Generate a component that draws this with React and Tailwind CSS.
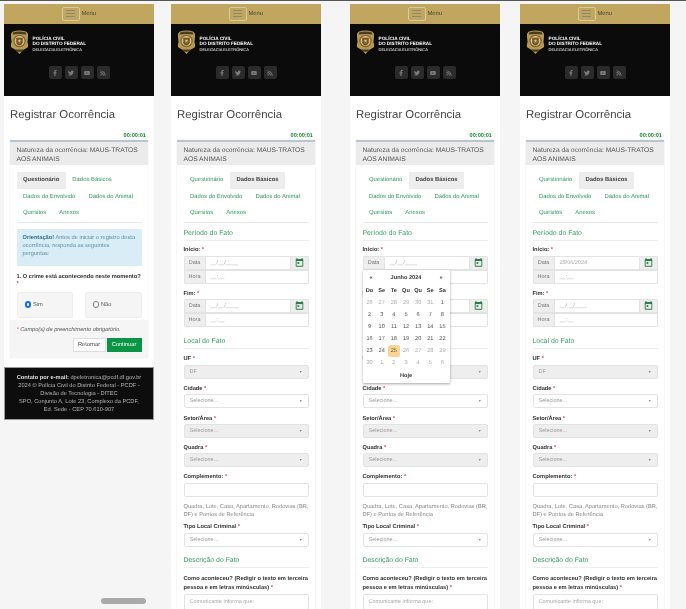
import React from "react";
import { FaFacebookF, FaTwitter, FaYoutube, FaRss } from "react-icons/fa";

const Req = () => <span className="text-[#d9534f]"> *</span>;

function Badge() {
  return (
    <svg viewBox="0 0 20 26" className="w-[19px] h-[26px] shrink-0">
      <path d="M2.5 2.2 Q10 -0.6 17.5 2.2 Q19.5 4 19 7 L18.4 13 Q19.6 16 18.8 18.5 L14 21.5 L10 25.6 L6 21.5 L1.2 18.5 Q0.4 16 1.6 13 L1 7 Q0.5 4 2.5 2.2 Z" fill="#b59a55" />
      <path d="M3.5 2.8 Q10 1 16.5 2.8 L17.2 5.2 Q10 3.8 2.8 5.2 Z" fill="#4a3d1c" />
      <path d="M5.5 21 L14.5 21 L12.6 23.2 L7.4 23.2 Z" fill="#4a3d1c" />
      <circle cx="10" cy="12" r="6.6" fill="#7a6a34" />
      <circle cx="10" cy="12" r="5.2" fill="#d8c074" />
      <path d="M6.6 8.6 H13.4 V13.5 Q13.4 15.6 10 16.6 Q6.6 15.6 6.6 13.5 Z" fill="#a8322a" />
      <path d="M8 9.6 H12 V13.2 Q12 14.6 10 15.2 Q8 14.6 8 13.2 Z" fill="#3b8a45" />
      <circle cx="10" cy="11.8" r="1.2" fill="#e6cd5c" />
    </svg>
  );
}

function Calendar() {
  return (
    <svg viewBox="0 0 10 10" className="w-[9px] h-[9px]">
      <rect x="1.6" y="0.2" width="1.3" height="1.8" fill="#2e7d4a" />
      <rect x="7.1" y="0.2" width="1.3" height="1.8" fill="#2e7d4a" />
      <rect x="0.8" y="1.2" width="8.4" height="8.4" rx="0.8" fill="#2e7d4a" />
      <rect x="1.8" y="3.4" width="6.4" height="5.2" fill="#e8f0ea" />
      <rect x="2.8" y="4.6" width="2" height="2" fill="#2e7d4a" />
    </svg>
  );
}

function Header() {
  const icons = [FaFacebookF, FaTwitter, FaYoutube, FaRss];
  return (
    <div>
      <div className="h-[19.5px] bg-[#c0a65f] flex justify-center items-center">
        <div className="flex items-center">
          <div className="w-[18px] h-[14px] border border-[#d9ca9a] rounded-[2px] flex flex-col justify-center gap-[2px] items-center">
            <span className="block w-[9px] h-[1px] bg-[#8c8872]" />
            <span className="block w-[9px] h-[1px] bg-[#8c8872]" />
            <span className="block w-[9px] h-[1px] bg-[#8c8872]" />
          </div>
          <span className="ml-[1.5px] pt-[2px] text-[5.9px] text-[#4f4733]">Menu</span>
        </div>
      </div>
      <div className="h-[72.5px] bg-[#0b0b0b] pt-[5.5px]">
        <div className="flex pl-[6px] items-start">
          <Badge />
          <div className="ml-[3.5px] mt-[6.5px] text-white font-bold">
            <div className="text-[4.7px] leading-[5.6px]">POLÍCIA CIVIL</div>
            <div className="text-[4.7px] leading-[5.6px]">DO DISTRITO FEDERAL</div>
            <div className="text-[4px] leading-[6px] mt-[0.8px] font-normal">DELEGACIA ELETRÔNICA</div>
          </div>
        </div>
        <div className="flex justify-center gap-[3px] mt-[11px]">
          {icons.map((I, i) => (
            <div key={i} className="w-[13px] h-[13px] rounded-[2px] bg-[#2b2b2b] flex items-center justify-center">
              <I className="text-[#7a7a7a] text-[6px]" />
            </div>
          ))}
        </div>
      </div>
    </div>
  );
}

function Tabs({ active }) {
  const rows = [["Questionário", "Dados Básicos"], ["Dados do Envolvido", "Dados do Animal"], ["Quesitos", "Anexos"]];
  return (
    <div className="mx-[6.5px] pt-[7px] border-b border-[#e8e8e8]">
      {rows.map((r, i) => (
        <div key={i} className="flex h-[16.5px]">
          {r.map((t) => (
            <div key={t} className={"px-[6.5px] leading-[16.5px] text-[5.9px] rounded-[1px] " + (t === active ? "bg-[#ededed] font-bold text-[#444]" : "text-[#2f9c5f]")}>
              {t}
            </div>
          ))}
        </div>
      ))}
    </div>
  );
}

function Section({ title, className }) {
  return <div className={"text-[6.9px] leading-[10px] text-[#2ea061] border-b border-[#eee] pb-[1px] " + className}>{title}</div>;
}

function Label({ children, className = "" }) {
  return <div className={"text-[5.7px] font-bold text-[#333] leading-[8px] " + className}>{children}</div>;
}

function Picker({ date }) {
  const row = (lbl, val, cal) => (
    <div className="flex h-[14px] text-[5.5px]">
      <div className="w-[22px] bg-[#eeeeee] border border-[#e3e3e3] text-[#777] flex items-center justify-center pt-[1.5px]">{lbl}</div>
      <div className={"flex-1 border-y border-[#e3e3e3] bg-white flex items-center pl-[5px] pt-[1.5px] text-[#aaa] " + (cal ? "" : "border-r")}>{val}</div>
      {cal && (
        <div className="w-[19px] bg-[#eeeeee] border border-[#e3e3e3] flex items-center justify-center">
          <Calendar />
        </div>
      )}
    </div>
  );
  return (
    <div className="rounded-[2px] overflow-hidden">
      {row("Data", date || "__/__/____", true)}
      {row("Hora", "__:__", false)}
    </div>
  );
}

function Select({ disabled, text = "Selecione..." }) {
  return (
    <div className={"h-[14px] border border-[#e3e3e3] rounded-[2px] flex items-center justify-between pl-[5px] pr-[5px] pt-[1.5px] text-[5.5px] text-[#999] " + (disabled ? "bg-[#eeeeee]" : "bg-white")}>
      <span>{text}</span>
      <span className="text-[3.5px] text-[#888]">▼</span>
    </div>
  );
}

function DatePopup() {
  const days = [
    [26, 27, 28, 29, 30, 31, 1],
    [2, 3, 4, 5, 6, 7, 8],
    [9, 10, 11, 12, 13, 14, 15],
    [16, 17, 18, 19, 20, 21, 22],
    [23, 24, 25, 26, 27, 28, 29],
    [30, 1, 2, 3, 4, 5, 6],
  ];
  return (
    <div className="absolute left-0 top-[14px] w-[87px] h-[113px] bg-white shadow-[0_1px_3px_rgba(0,0,0,0.35)] rounded-[1px] z-10 text-[5.6px] text-[#333] pt-[3px] px-[1px]">
      <div className="flex justify-between items-center h-[12px] px-[6px] font-bold">
        <span>«</span>
        <span>Junho 2024</span>
        <span>»</span>
      </div>
      <div className="grid grid-cols-7 font-bold text-center leading-[12px]">
        {["Do", "Se", "Te", "Qu", "Qu", "Se", "Sa"].map((d, i) => (
          <span key={i}>{d}</span>
        ))}
      </div>
      {days.map((r, ri) => (
        <div key={ri} className="grid grid-cols-7 text-center leading-[12px]">
          {r.map((d, i) => {
            const old = (ri === 0 && d > 20) || ri === 5 || (ri === 4 && d > 25);
            const sel = ri === 4 && d === 25;
            return (
              <span key={i} className={sel ? "bg-[#fad591] rounded-[2px] text-[#555]" : old ? "text-[#aaa]" : "text-[#555]"}>
                {d}
              </span>
            );
          })}
        </div>
      ))}
      <div className="text-center font-bold leading-[14px]">Hoje</div>
    </div>
  );
}

function Timer() {
  return <div className="text-right text-[5.6px] font-bold text-[#118a2f] leading-[7px] pr-[2px]">00:00:01</div>;
}

function Title() {
  return (
    <div className="h-[37px] pt-[10.5px] text-[11.4px] leading-[16px] text-[#444]">Registrar Ocorrência</div>
  );
}

function CardHead() {
  return (
    <div className="bg-[#ebebeb] border-t-2 border-[#b9c6cf] px-[6.5px] pt-[3.5px] h-[25px] text-[6.7px] leading-[9.5px] text-[#555]">
      Natureza da ocorrência: MAUS-TRATOS AOS ANIMAIS
    </div>
  );
}

function First() {
  return (
    <div className="w-[150px] shrink-0">
      <div className="bg-white h-[363px] flex flex-col">
        <Header />
        <div className="px-[6px]">
          <Title />
          <Timer />
          <div className="bg-[#f5f5f5] rounded-[2px] shadow-[0_0_1px_rgba(0,0,0,0.2)] h-[218px]">
            <CardHead />
            <div className="bg-white h-[155px]">
              <Tabs active="Questionário" />
              <div className="mx-[6.5px] mt-[6px] h-[37px] bg-[#d9edf7] rounded-[1px] px-[6px] pt-[5.5px] text-[5.7px] leading-[8px] text-[#5d8ca6]">
                <b className="text-[#31708f]">Orientação!</b> Antes de iniciar o registro desta<br />ocorrência, responda as seguintes<br />perguntas:
              </div>
              <div className="mx-[6.5px] mt-[8px] text-[5.7px] font-bold text-[#333] leading-[7.5px] whitespace-nowrap">
                1. O crime está acontecendo neste momento?<br /><span className="text-[#d9534f]">*</span>
              </div>
              <div className="mx-[6.5px] mt-[3px] flex justify-between">
                <div className="w-[56px] h-[26px] bg-[#f5f5f5] border border-[#eee] rounded-[2px] flex items-center pl-[7px] text-[5.7px] text-[#555]">
                  <span className="w-[6.5px] h-[6.5px] rounded-full border-[2px] border-[#0a6fe8] bg-white mr-[2px]" /><span className="pt-[1.5px]">Sim</span>
                </div>
                <div className="w-[57px] h-[26px] bg-[#f5f5f5] border border-[#eee] rounded-[2px] flex items-center pl-[7px] text-[5.7px] text-[#555]">
                  <span className="w-[6.5px] h-[6.5px] rounded-full border-[0.5px] border-[#777] bg-white mr-[2px]" /><span className="pt-[1.5px]">Não</span>
                </div>
              </div>
            </div>
            <div className="px-[6.5px] pt-[6px]">
              <div className="text-[5.6px] italic text-[#555] leading-[8px]"><span className="text-[#d9534f]">*</span> Campo(s) de preenchimento obrigatório.</div>
              <div className="flex justify-end gap-[1px] mt-[4px]">
                <div className="w-[33px] h-[14px] bg-white border border-[#ddd] flex items-center justify-center pt-[1.5px] text-[5.7px] text-[#444]">Retornar</div>
                <div className="w-[35px] h-[14px] bg-[#0b9444] flex items-center justify-center pt-[1.5px] text-[5.7px] text-white">Continuar</div>
              </div>
            </div>
          </div>
        </div>
      </div>
      <div className="h-[53px] bg-[#0d0d0d] border border-[#999] pt-[6px] text-center text-[5.7px] leading-[8px] text-[#b5b5b5]">
        <b className="text-[#ddd]">Contato por e-mail:</b> dpeletronica@pcdf.df.gov.br<br />
        2024 © Polícia Civil do Distrito Federal - PCDF -<br />
        Divisão de Tecnologia - DITEC<br />
        SPO, Conjunto A, Lote 23, Complexo da PCDF,<br />
        Ed. Sede - CEP 70.610-907
      </div>
    </div>
  );
}

function Form({ open, date }) {
  return (
    <div className="w-[150px] shrink-0 bg-white h-[605px] overflow-hidden">
      <Header />
      <div className="px-[6px]">
        <Title />
        <Timer />
        <div className="shadow-[0_0_1px_rgba(0,0,0,0.2)] h-[500px]">
          <CardHead />
          <Tabs active="Dados Básicos" />
          <div className="mx-[6.5px]">
            <Section title="Período do Fato" className="mt-[6px]" />
            <Label className="mt-[5px]">Início: <Req /></Label>
            <div className="mt-[2px] relative">
              <Picker date={date} />
              {open && <DatePopup />}
            </div>
            <Label className="mt-[6px]">Fim: <Req /></Label>
            <div className="mt-[1px]"><Picker /></div>
            <Section title="Local do Fato" className="mt-[10px]" />
            <Label className="mt-[6px]">UF <Req /></Label>
            <div className="mt-[2px]"><Select disabled text="DF" /></div>
            {[["Cidade", false, "mt-[6px]"], ["Setor/Área", true, "mt-[7px]"], ["Quadra", true, "mt-[6px]"]].map(([l, d, m]) => (
              <div key={l}>
                <Label className={m}>{l} <Req /></Label>
                <div className="mt-[1px]"><Select disabled={d} /></div>
              </div>
            ))}
            <Label className="mt-[6px]">Complemento: <Req /></Label>
            <div className="mt-[2px] h-[14px] border border-[#e3e3e3] rounded-[2px] bg-white" />
            <div className="mt-[6px] text-[5.7px] leading-[8.5px] text-[#888]">Quadra, Lote, Casa, Apartamento, Rodovias (BR, DF) e Pontos de Referência</div>
            <Label className="mt-[3px]">Tipo Local Criminal <Req /></Label>
            <div className="mt-[2px]"><Select /></div>
            <Section title="Descrição do Fato" className="mt-[9px]" />
            <Label className="mt-[7px] leading-[9px] whitespace-nowrap">Como aconteceu? (Redigir o texto em terceira<br />pessoa e em letras minúsculas) <Req /></Label>
            <div className="mt-[1px] h-[40px] border border-[#e3e3e3] rounded-[2px] pl-[5px] pt-[3px] text-[5.5px] text-[#aaa]">Comunicante informa que:</div>
          </div>
        </div>
      </div>
    </div>
  );
}

export default function App() {
  return (
    <div className="h-[609px] w-[686px] overflow-hidden relative bg-[#f5f5f5] border-t border-[#555] pt-[3px] pl-[4px] flex items-start [text-rendering:geometricPrecision] blur-[0.3px]" style={{ fontFamily: '"Liberation Sans", Arial, sans-serif' }}>
      <First />
      <div className="ml-[17px]"><Form /></div>
      <div className="ml-[29px]"><Form open /></div>
      <div className="ml-[20px]"><Form date="25/06/2024" /></div>
      <div className="absolute left-[101px] top-[597px] w-[45px] h-[6px] rounded-full bg-[#a9a9a9]" />
    </div>
  );
}
